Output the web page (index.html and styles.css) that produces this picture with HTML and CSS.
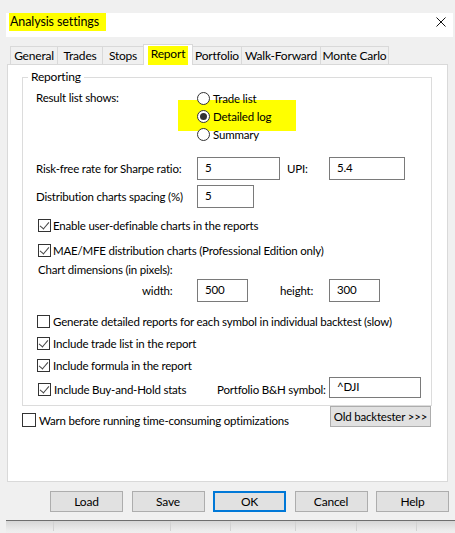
FILE: index.html
```html
<!DOCTYPE html>
<html>
<head>
<meta charset="utf-8">
<link rel="stylesheet" href="styles.css">
</head>
<body>
<div class="window">
  <div class="titlebar">
    <span class="title">Analysis settings</span>
    <svg class="close" width="10" height="10" viewBox="0 0 10 10"><path d="M0.5 0.5L9.5 9.5M9.5 0.5L0.5 9.5" stroke="#111" stroke-width="1" fill="none"/></svg>
  </div>

  <div class="tabs">
    <div class="tab w-general">General</div>
    <div class="tab w-trades">Trades</div>
    <div class="tab w-stops">Stops</div>
    <div class="tab tab-active w-report"><span class="tab-hl">Report</span></div>
    <div class="tab w-portfolio">Portfolio</div>
    <div class="tab w-wf">Walk-Forward</div>
    <div class="tab w-mc">Monte Carlo</div>
  </div>

  <div class="panel">
    <div class="group">
      <div class="legend">Reporting</div>

      <div class="row-result">
        <div class="lbl lbl-main">Result list shows:</div>
        <div class="radios">
          <div class="radio-hl"></div>
          <div class="radio"><span class="rb"></span><span>Trade list</span></div>
          <div class="radio"><span class="rb rb-on"></span><span>Detailed log</span></div>
          <div class="radio"><span class="rb"></span><span>Summary</span></div>
        </div>
      </div>

      <div class="row-field row-risk">
        <div class="lbl lbl-main">Risk-free rate for Sharpe ratio:</div>
        <div class="input w-risk">5</div>
        <div class="lbl lbl-upi">UPI:</div>
        <div class="input w-upi">5.4</div>
      </div>

      <div class="row-field row-dist">
        <div class="lbl lbl-main">Distribution charts spacing (%)</div>
        <div class="input w-dist">5</div>
      </div>

      <div class="check row-enable"><span class="cb cb-on"></span><span>Enable user-definable charts in the reports</span></div>
      <div class="check row-mae"><span class="cb cb-on"></span><span>MAE/MFE distribution charts (Professional Edition only)</span></div>

      <div class="row-dims-title">Chart dimensions (in pixels):</div>
      <div class="row-field row-dims">
        <div class="lbl lbl-width">width:</div>
        <div class="input w-dim">500</div>
        <div class="lbl lbl-height">height:</div>
        <div class="input w-dim">300</div>
      </div>

      <div class="check row-generate"><span class="cb"></span><span>Generate detailed reports for each symbol in individual backtest (slow)</span></div>
      <div class="check row-list"><span class="cb cb-on"></span><span>Include trade list in the report</span></div>
      <div class="check row-formula"><span class="cb cb-on"></span><span>Include formula in the report</span></div>

      <div class="row-bh">
        <div class="check check-bh"><span class="cb cb-on"></span><span>Include Buy-and-Hold stats</span></div>
        <div class="lbl lbl-sym">Portfolio B&amp;H symbol:</div>
        <div class="input w-sym">^DJI</div>
      </div>
    </div>

    <div class="row-after">
      <div class="check check-warn"><span class="cb cb-warn"></span><span>Warn before running time-consuming optimizations</span></div>
      <div class="btn btn-old">Old backtester &gt;&gt;&gt;</div>
    </div>
  </div>

  <div class="buttons">
    <div class="btn btn-main">Load</div>
    <div class="btn btn-main">Save</div>
    <div class="btn btn-main btn-default">OK</div>
    <div class="btn btn-main">Cancel</div>
    <div class="btn btn-main">Help</div>
  </div>
</div>

<div class="taskstrip">
  <div class="cell c1"></div>
  <div class="cell c2"></div>
  <div class="cell c3"></div>
  <div class="cell c4"></div>
  <div class="cell c5"></div>
  <div class="cell c6"></div>
  <div class="cell c7"></div>
</div>
</body>
</html>
```

FILE: styles.css
```css
html, body {
  margin: 0;
  padding: 0;
}
body {
  width: 455px;
  height: 533px;
  overflow: hidden;
  background: #f0f0f0;
  font-family: Lato, "Noto Sans", sans-serif;
  font-size: 11.5px;
  letter-spacing: -0.2px;
  color: #000;
}
.window {
  padding-top: 13px;
  margin-left: 6px;
  width: 447px;
}

/* title bar */
.titlebar {
  height: 24px;
  background: #fff;
  display: flex;
  justify-content: space-between;
  align-items: flex-start;
}
.title {
  margin-left: 3px;
  width: 97px;
  height: 18px;
  line-height: 18px;
  padding-left: 1px;
  box-sizing: border-box;
  background: #ffff00;
  white-space: nowrap;
  font-size: 12.5px;
  letter-spacing: -0.1px;
}
.close {
  margin-top: 4px;
  margin-right: 7px;
}

/* tabs */
.tabs {
  display: flex;
  align-items: flex-end;
  height: 20px;
  margin-top: 7px;
  margin-left: 4px;
  position: relative;
  z-index: 1;
}
.tab {
  height: 18px;
  line-height: 17px;
  box-sizing: border-box;
  border: 1px solid #d9d9d9;
  border-bottom: none;
  background: #f0f0f0;
  text-align: center;
  margin-left: -1px;
  white-space: nowrap;
  font-size: 12px;
}
.tab:first-child { margin-left: 0; }
.w-general { width: 48px; }
.w-trades { width: 46px; }
.w-stops { width: 42px; }
.w-report { width: 50px; }
.w-portfolio { width: 50px; }
.w-wf { width: 80px; }
.w-mc { width: 69px; }
.tab-active {
  height: 21px;
  margin-bottom: -1px;
  background: #fff;
  display: flex;
  justify-content: center;
}
.tab-hl {
  display: block;
  margin-top: 1px;
  width: 40px;
  height: 19px;
  line-height: 16px;
  background: #ffff00;
}

/* panel */
.panel {
  margin-left: 1px;
  width: 441px;
  height: 418px;
  box-sizing: border-box;
  border: 1px solid #d9d9d9;
  background: #fff;
  padding-top: 12px;
}
.group {
  margin-left: 14px;
  width: 410px;
  box-sizing: border-box;
  border: 1px solid #dcdcdc;
  padding: 0 0 4px 13px;
}
.legend {
  display: table;
  margin: -9px 0 0 -8px;
  padding: 0 3px;
  line-height: 16px;
  background: #fff;
  font-size: 12px;
}

.lbl { white-space: nowrap; }
.lbl-main { width: 161px; flex: none; }

.row-result {
  display: flex;
  margin-top: 4px;
}
.row-result .lbl-main { line-height: 18px; }
.radios {
  position: relative;
  z-index: 0;
}
.radio-hl {
  position: absolute;
  left: -19px;
  top: 11px;
  width: 118px;
  height: 31px;
  background: #ffff00;
  z-index: -1;
}
.radio {
  display: flex;
  align-items: center;
  height: 18px;
  gap: 3px;
  white-space: nowrap;
}
.rb {
  width: 13px;
  height: 13px;
  box-sizing: border-box;
  border: 1px solid #333;
  border-radius: 50%;
  background: #fff;
  display: flex;
  align-items: center;
  justify-content: center;
  flex: none;
}
.rb-on::after {
  content: "";
  width: 7px;
  height: 7px;
  border-radius: 50%;
  background: #333;
}

.row-field {
  display: flex;
  align-items: center;
  height: 23px;
}
.input {
  height: 23px;
  box-sizing: border-box;
  border: 1px solid #7a7a7a;
  background: #fff;
  padding-left: 7px;
  line-height: 19px;
  flex: none;
  white-space: nowrap;
}
.row-risk { margin-top: 14px; }
.w-risk { width: 83px; }
.lbl-upi { margin-left: 7px; width: 42px; }
.w-upi { width: 76px; }
.row-dist { margin-top: 5px; }
.w-dist { width: 57px; }

.check {
  display: flex;
  align-items: center;
  height: 18px;
  padding-left: 1px;
  gap: 3px;
  white-space: nowrap;
}
.cb {
  width: 13px;
  height: 13px;
  box-sizing: border-box;
  border: 1px solid #333;
  background: #fff;
  flex: none;
  position: relative;
}
.cb-on::after {
  content: "";
  position: absolute;
  left: 3px;
  top: 0px;
  width: 4px;
  height: 8px;
  border: solid #444;
  border-width: 0 1px 1px 0;
  transform: rotate(40deg);
}
.row-enable { margin-top: 8px; padding-left: 2px; gap: 2px; }
.row-mae { margin-top: 7px; padding-left: 2px; gap: 2px; }
.row-dims-title {
  margin-top: 2px;
  padding-left: 2px;
  line-height: 18px;
}
.row-dims { margin-top: 0; }
.lbl-width { margin-left: 106px; width: 55px; }
.w-dim { width: 51px; }
.lbl-height { margin-left: 32px; width: 49px; }
.row-generate { margin-top: 10px; }
.row-list { margin-top: 4px; }
.row-formula { margin-top: 4px; }

.row-bh {
  display: flex;
  align-items: center;
  height: 24px;
  margin-top: 3px;
}
.check-bh { padding-left: 2px; width: 179px; flex: none; }
.lbl-sym { width: 112px; flex: none; }
.w-sym { width: 92px; height: 21px; align-self: flex-start; line-height: 17px; }

.row-after {
  display: flex;
  align-items: flex-start;
  margin-left: 14px;
  width: 410px;
}
.check-warn {
  margin-top: 7px;
  padding-left: 0;
  height: 14px;
}
.cb-warn { width: 14px; height: 14px; }
.btn {
  box-sizing: border-box;
  border: 1px solid #adadad;
  background: #e1e1e1;
  text-align: center;
  white-space: nowrap;
  overflow: hidden;
}
.btn-old {
  margin-left: auto;
  margin-right: 1px;
  width: 101px;
  height: 21px;
  line-height: 19px;
  display: flex;
  justify-content: center;
}

.buttons {
  display: flex;
  justify-content: space-between;
  margin-top: 9px;
  margin-left: 44px;
  width: 399px;
}
.btn-main {
  width: 73px;
  height: 21px;
  line-height: 19px;
  font-size: 12px;
}
.btn-default {
  border: 2px solid #0078d7;
  line-height: 17px;
}

.taskstrip {
  margin-top: 8px;
  margin-left: 6px;
  height: 13px;
  border-top: 1px solid #6e6e6e;
  background: linear-gradient(#d6d6d6, #ececec 70%, #f0f0f0);
  display: flex;
}
.cell { height: 10px; flex: none; }
.cell + .cell { border-left: 1px solid #d2d2d2; }
.c1 { width: 47px; }
.c2 { width: 116px; }
.c3 { width: 59px; }
.c4 { width: 64px; }
.c5 { width: 60px; }
.c6 { width: 59px; }
.c7 { flex: 1; }
```
